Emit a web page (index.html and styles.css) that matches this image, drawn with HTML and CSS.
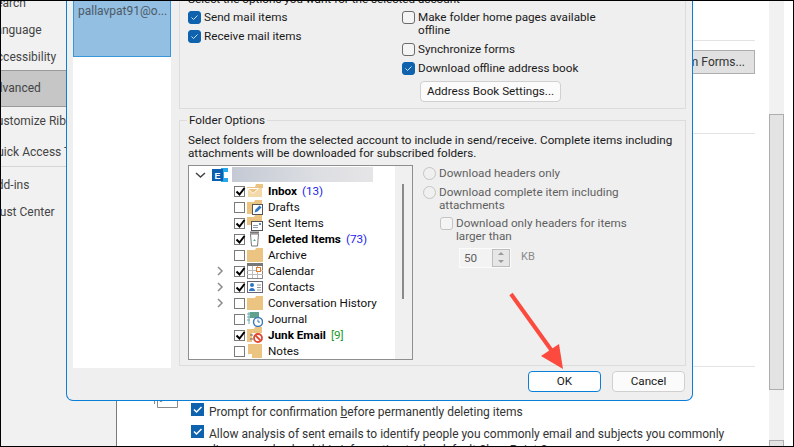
FILE: index.html
```html
<!DOCTYPE html>
<html lang="en">
<head>
<meta charset="utf-8">
<title>Outlook Options - Send/Receive Settings</title>
<link rel="stylesheet" href="styles.css">
</head>
<body>
<div class="screen">
  <aside class="side">
    <div class="side-item h27 first">Search</div>
    <div class="side-item h27">Language</div>
    <div class="side-item h27 last-plain">Accessibility</div>
    <div class="side-item selected">Advanced</div>
    <div class="side-item h31">Customize Ribbon</div>
    <div class="side-item ruled">Quick Access Toolbar</div>
    <div class="side-item h27 gap">Add-ins</div>
    <div class="side-item h27">Trust Center</div>
  </aside>
  <main class="main">
    <div class="rule"></div>
    <div class="forms-row"><span class="back-btn">Custom Forms...</span></div>
    <div class="rule rule-b"></div>
    <div class="rule rule-c"></div>
    <div class="back-options">
      <svg class="back-icon" width="24" height="14" viewBox="0 0 24 14"><path d="M.5 0v10M3.500 0v13.500h20V0M9 6.500h12" fill="none" stroke="#8a8a8a"/><circle cx="7" cy="6.500" r="1.200" fill="none" stroke="#8a8a8a"/></svg>
      <div class="back-lines">
        <label class="back-check"><span class="cb-blue"><svg width="13" height="13" viewBox="0 0 13 13"><path d="M3 6.500l2.500 2.500 5-5" fill="none" stroke="#fff" stroke-width="1.500"/></svg></span><span class="back-text">Prompt for confirmation <u>b</u>efore permanently deleting items</span></label>
        <label class="back-check"><span class="cb-blue"><svg width="13" height="13" viewBox="0 0 13 13"><path d="M3 6.500l2.500 2.500 5-5" fill="none" stroke="#fff" stroke-width="1.500"/></svg></span><span class="back-text">Allow analysis of sent emails to identify people you commonly email and subjects you commonly discuss, and upload this information to the default SharePoint Server.</span></label>
      </div>
    </div>
  </main>
  <div class="scroll"><div class="thumb"></div><div class="thumb-end"></div></div>
  <div class="right-gap"></div>

  <section class="dialog">
    <div class="dialog-body">
      <div class="accounts"><div class="account">pallavpat91@o...</div></div>
      <div class="panes">
        <div class="top-pane">
          <p class="clip-line">Select the options you want for the selected account</p>
          <div class="top-cols">
            <div class="col-left">
              <label class="opt"><span class="cb on"><svg width="13" height="13" viewBox="0 0 13 13"><path d="M3.500 6.500l2 2 4-4" fill="none" stroke="#cfe2f5" stroke-width="1"/></svg></span>Send mail items</label>
              <label class="opt"><span class="cb on"><svg width="13" height="13" viewBox="0 0 13 13"><path d="M3.500 6.500l2 2 4-4" fill="none" stroke="#cfe2f5" stroke-width="1"/></svg></span>Receive mail items</label>
            </div>
            <div class="col-right">
              <label class="opt"><span class="cb"></span><span class="wrap">Make folder home pages available offline</span></label>
              <label class="opt"><span class="cb"></span>Synchronize forms</label>
              <label class="opt"><span class="cb on"><svg width="13" height="13" viewBox="0 0 13 13"><path d="M3.500 6.500l2 2 4-4" fill="none" stroke="#cfe2f5" stroke-width="1"/></svg></span>Download offline address book</label>
              <div class="book-row"><span class="btn book">Address Book Settings...</span></div>
            </div>
          </div>
        </div>
        <fieldset class="folder-pane">
          <legend>Folder Options</legend>
          <p class="desc">Select folders from the selected account to include in send/receive. Complete items including attachments will be downloaded for subscribed folders.</p>
          <div class="folder-cols">
            <div class="tree">
              <div class="tree-list">
                <div class="node root">
                  <svg class="chev" width="12" height="16" viewBox="0 0 12 16"><path d="M2 6l4.500 4 4.500-4" fill="none" stroke="#444" stroke-width="1.500"/></svg>
                  <svg class="ex" width="16" height="14" viewBox="0 0 16 14"><rect x="9" width="7" height="14" fill="#28a8ea"/><rect x="12" y="4" width="4" height="6" fill="#fff"/><rect x="0" y="1" width="11" height="12" fill="#0a5fae"/><text x="2.500" y="10.500" font-family="Liberation Sans" font-size="9" font-weight="700" fill="#fff">E</text></svg>
                  <span class="blur"></span>
                </div>
                <div class="node"><i class="exp"></i><span class="tick"><svg width="13" height="13" viewBox="0 0 13 13"><path d="M2.500 6.500l3 3 5-6.500" fill="none" stroke="#000" stroke-width="2"/></svg></span>
                  <svg class="ico" width="16" height="16" viewBox="0 0 16 16"><path d="M0 4h8l1-3h7v14H0z" fill="#eac480"/><path d="M.5 5.500h11l-5.500 5z M.5 5.500v9h15V5" fill="#f3d9a8" stroke="#fff"/></svg>
                  <b>Inbox</b><span class="n-blue">(13)</span></div>
                <div class="node"><i class="exp"></i><span class="tick"></span>
                  <svg class="ico" width="16" height="16" viewBox="0 0 16 16"><path d="M0 3h7l1-2h7v4H5v10H0z" fill="#eac480"/><rect x="5.500" y="5.500" width="10" height="10" fill="#fff" stroke="#555"/><path d="M7.500 13.500l1-3 4-4 2 2-4 4z" fill="#2e76c4"/></svg>
                  <span>Drafts</span></div>
                <div class="node"><i class="exp"></i><span class="tick"><svg width="13" height="13" viewBox="0 0 13 13"><path d="M2.500 6.500l3 3 5-6.500" fill="none" stroke="#000" stroke-width="2"/></svg></span>
                  <svg class="ico" width="16" height="16" viewBox="0 0 16 16"><path d="M0 2h7l1-2h7v6H4v4H0z" fill="#eac480"/><rect x="4.500" y="6.500" width="11" height="9" fill="#fff" stroke="#555"/><path d="M6 10.500h5M6 12.500h5" stroke="#8a9bb0"/><rect x="12" y="8" width="2" height="2" fill="#5b8fc7"/></svg>
                  <span>Sent Items</span></div>
                <div class="node"><i class="exp"></i><span class="tick"><svg width="13" height="13" viewBox="0 0 13 13"><path d="M2.500 6.500l3 3 5-6.500" fill="none" stroke="#000" stroke-width="2"/></svg></span>
                  <svg class="ico" width="16" height="16" viewBox="0 0 16 16"><path d="M3.500 3h8l-1 12h-6z" fill="#fff" stroke="#777"/><path d="M3 1.500h9" stroke="#777" stroke-width="2"/><path d="M6 10l1.500-2 1.500 2z" fill="#5fae8f"/></svg>
                  <b>Deleted Items</b><span class="n-blue">(73)</span></div>
                <div class="node"><i class="exp"></i><span class="tick"></span>
                  <svg class="ico" width="16" height="16" viewBox="0 0 16 16"><path d="M0 3h8l1-2h7v14H0z" fill="#eac480"/></svg>
                  <span>Archive</span></div>
                <div class="node"><i class="exp"><svg width="8" height="10" viewBox="0 0 8 10"><path d="M2 1l4 4-4 4" fill="none" stroke="#8c8c8c" stroke-width="1.500"/></svg></i><span class="tick"><svg width="13" height="13" viewBox="0 0 13 13"><path d="M2.500 6.500l3 3 5-6.500" fill="none" stroke="#000" stroke-width="2"/></svg></span>
                  <svg class="ico" width="16" height="16" viewBox="0 0 16 16"><rect x=".5" y=".5" width="15" height="15" fill="#fff" stroke="#888"/><rect width="16" height="3" fill="#777"/><path d="M5.500 3v12M10.500 3v12M0 7.500h16M0 11.500h16" stroke="#bbb"/><rect x="9.500" y="4.500" width="4" height="4" fill="#fff" stroke="#e87722"/></svg>
                  <span>Calendar</span></div>
                <div class="node"><i class="exp"><svg width="8" height="10" viewBox="0 0 8 10"><path d="M2 1l4 4-4 4" fill="none" stroke="#8c8c8c" stroke-width="1.500"/></svg></i><span class="tick"><svg width="13" height="13" viewBox="0 0 13 13"><path d="M2.500 6.500l3 3 5-6.500" fill="none" stroke="#000" stroke-width="2"/></svg></span>
                  <svg class="ico" width="16" height="16" viewBox="0 0 16 16"><rect x=".5" y="2.500" width="15" height="11" fill="#fff" stroke="#667"/><circle cx="5" cy="6" r="2" fill="#2e76c4"/><path d="M2 12c0-4 6-4 6 0z" fill="#2e76c4"/><path d="M10 6h4M10 8.500h4M10 11h4" stroke="#999"/></svg>
                  <span>Contacts</span></div>
                <div class="node"><i class="exp"><svg width="8" height="10" viewBox="0 0 8 10"><path d="M2 1l4 4-4 4" fill="none" stroke="#8c8c8c" stroke-width="1.500"/></svg></i><span class="tick"></span>
                  <svg class="ico" width="16" height="16" viewBox="0 0 16 16"><path d="M0 3h8l1-2h7v14H0z" fill="#eac480"/></svg>
                  <span>Conversation History</span></div>
                <div class="node"><i class="exp"></i><span class="tick"></span>
                  <svg class="ico" width="16" height="16" viewBox="0 0 16 16"><path d="M2 1v12M0 3h3M0 6h3M0 9h3" stroke="#6aa" fill="none"/><rect x="3" y="1" width="9" height="6" fill="#5fa08f"/><circle cx="11" cy="11" r="4.500" fill="#fff" stroke="#3a78b8" stroke-width="1.400"/><path d="M11 8.500V11h2" fill="none" stroke="#3a78b8"/></svg>
                  <span>Journal</span></div>
                <div class="node"><i class="exp"></i><span class="tick"><svg width="13" height="13" viewBox="0 0 13 13"><path d="M2.500 6.500l3 3 5-6.500" fill="none" stroke="#000" stroke-width="2"/></svg></span>
                  <svg class="ico" width="16" height="16" viewBox="0 0 16 16"><path d="M0 2h7l1-2h7v6H5v9H0z" fill="#eac480"/><path d="M3 8h3M3 12h3" stroke="#666"/><circle cx="11" cy="11" r="4" fill="#fff" stroke="#e0492f" stroke-width="1.800"/><path d="M8.500 8.500l5 5" stroke="#e0492f" stroke-width="1.800"/></svg>
                  <b>Junk Email</b><span class="n-green">[9]</span></div>
                <div class="node"><i class="exp"></i><span class="tick"></span>
                  <svg class="ico" width="16" height="16" viewBox="0 0 16 16"><path d="M1 1h14v14H5l-4-4z" fill="#eac480"/><path d="M1 11h4v4z" fill="#fff"/></svg>
                  <span>Notes</span></div>
              </div>
              <div class="tree-bar"><div class="tree-thumb"></div></div>
            </div>
            <div class="dl-opts">
              <label class="opt dim"><span class="radio"></span>Download headers only</label>
              <label class="opt dim"><span class="radio"></span><span class="wrap">Download complete item including attachments</span></label>
              <label class="opt dim sub"><span class="cb dimcb"></span><span class="wrap">Download only headers for items larger than</span></label>
              <div class="size-row">
                <span class="spin"><span class="spin-val">50</span><span class="spin-btns"><i class="up"></i><i class="dn"></i></span></span>
                <span class="kb">KB</span>
              </div>
            </div>
          </div>
        </fieldset>
      </div>
    </div>
    <div class="dialog-foot">
      <span class="btn foot ok">OK</span>
      <span class="btn foot">Cancel</span>
    </div>
  </section>

  <svg class="arrow" width="70" height="90" viewBox="0 0 70 90"><path d="M3 4L44 61" stroke="#fc4a3e" stroke-width="4" fill="none"/><path d="M55 79L33 66 51 54z" fill="#fc4a3e"/></svg>
</div>
</body>
</html>
```
FILE: styles.css
```css
* { box-sizing: border-box; }
html, body { margin: 0; padding: 0; background: #fff; }
.screen {
  position: relative;
  width: 794px;
  height: 447px;
  overflow: hidden;
  display: flex;
  border: 1px solid #000;
  font-family: Roboto, "Noto Sans", sans-serif;
  font-size: 11.7px;
  line-height: 13px;
  color: #1a1a1a;
}
p { margin: 0; }
u { text-decoration: underline; }

.side {
  width: 116px;
  flex: none;
  background: #f1f1f1;
  border-right: 1px solid #7a7a7a;
  overflow: hidden;
  font-size: 12px;
  color: #444;
}
.side-item { display: flex; align-items: center; text-indent: -12px; white-space: nowrap; }
.h27 { height: 27px; }
.h31 { height: 31px; padding-bottom: 3px; }
.first { margin-top: -11px; }
.last-plain { margin-bottom: -1px; }
.selected {
  height: 37px;
  background: #c6c6c6;
  border-top: 1px solid #9a9a9a;
  border-bottom: 1px solid #9a9a9a;
  text-indent: -13px;
}
.ruled { height: 29px; border-bottom: 1px solid #d5d5d5; }
.gap { margin-top: 5px; }

.main { flex: 1; min-width: 0; background: #fff; padding-top: 39px; overflow: hidden; font-size: 12px; }
.rule { height: 1px; background: #e3e3e3; margin: 0 14px 0 28px; }
.forms-row { display: flex; justify-content: flex-end; margin: 9px 14px 0 0; height: 24px; }
.back-btn {
  flex: none;
  padding: 0 9px;
  display: flex;
  align-items: center;
  background: #e1e1e1;
  border: 1px solid #adadad;
  color: #333;
  white-space: nowrap;
}
.rule-b { margin-top: 59px; }
.rule-c { margin-top: 232px; }
.back-options { display: flex; margin: 27px 0 0 37px; }
.back-icon { flex: none; }
.back-lines { width: 540px; margin: 9px 0 0 13px; display: flex; flex-direction: column; gap: 5px; color: #333; }
.back-check { display: flex; gap: 5px; line-height: 16px; }
.back-text { padding-top: 1px; }
.cb-blue { flex: none; width: 13px; height: 13px; background: #0f62ae; display: block; }
.cb-blue svg { display: block; }

.scroll { width: 15px; flex: none; background: #f1f1f1; padding-top: 113px; }
.thumb { height: 276px; background: #e3e3e3; border: 1px solid #adadad; }
.thumb-end { height: 14px; margin-top: 50px; background: #e3e3e3; border: 1px solid #adadad; }
.right-gap { width: 9px; flex: none; background: #fff; }

.dialog {
  position: absolute;
  left: 65px;
  top: -1px;
  width: 627px;
  height: 401px;
  display: flex;
  flex-direction: column;
  background: #efefef;
  border: 1px solid #0a7fd8;
  border-top: 0;
  border-radius: 0 0 7px 7px;
}
.dialog-body { flex: none; display: flex; padding-left: 6px; height: 368px; }
.accounts { width: 98px; flex: none; height: 368px; background: #fff; }
.account {
  height: 57px;
  background: #92bfe2;
  border: 1px solid #3a96da;
  border-top: 0;
  padding: 4px 0 0 4px;
  font-size: 12px;
  line-height: 14px;
  color: #4d5a66;
  white-space: nowrap;
}
.panes { flex: 1; padding: 0 6px 0 8px; min-width: 0; display: flex; flex-direction: column; }
.top-pane { height: 109px; flex: none; border: 1px solid #dcdcdc; border-top: 0; padding: 0 8px; margin-bottom: 4px; }
.clip-line { margin-top: -7px; height: 13px; white-space: nowrap; }
.top-cols { display: flex; margin-top: 5px; }
.col-left { width: 214px; flex: none; display: flex; flex-direction: column; gap: 6px; }
.col-right { width: 220px; display: flex; flex-direction: column; gap: 6px; }
.opt { display: flex; gap: 3px; line-height: 13px; }
.wrap { display: block; }
.col-right .wrap { width: 190px; }
.cb { flex: none; width: 13px; height: 13px; border: 1px solid #6b6b6b; border-radius: 3px; background: #f4f4f4; display: block; }
.cb.on { background: #0f62ae; border-color: #0f62ae; }
.cb svg { display: block; margin: -1px; }
.book-row { padding-left: 18px; }
.btn {
  display: inline-flex;
  align-items: center;
  justify-content: center;
  height: 21px;
  background: #fbfbfb;
  border: 1px solid #d0d0d0;
  border-radius: 4px;
  white-space: nowrap;
  color: #1a1a1a;
}
.book { width: 141px; }

.folder-pane { flex: none; margin: 0; border: 1px solid #dcdcdc; padding: 0 8px; min-width: 0; height: 253px; }
.folder-pane legend { padding: 0 2px; margin-left: -1px; line-height: 14px; }
.desc { margin-top: 7px; }
.folder-cols { display: flex; margin-top: 5px; gap: 10px; }
.tree { width: 225px; height: 195px; flex: none; background: #fff; border: 1px solid #8e8e8e; display: flex; overflow: hidden; }
.tree-list { flex: 1; min-width: 0; }
.tree-bar { width: 17px; flex: none; background: #f0f0f0; padding: 18px 0 0 7px; }
.tree-thumb { width: 2px; height: 115px; background: #8a8a8a; }
.node { display: flex; align-items: center; height: 16px; white-space: nowrap; color: #111; }
.node.root { height: 17px; padding-left: 5px; }
.chev { flex: none; margin-right: 6px; }
.ex { flex: none; }
.blur { display: block; width: 141px; height: 15px; margin-left: 4px; background: linear-gradient(90deg, #c4c9d4, #dcdee2 60%, #e6e4e6); }
.exp { flex: none; width: 18px; display: block; margin-left: 27px; height: 10px; }
.exp svg { display: block; }
.tick { flex: none; width: 11px; height: 11px; border: 1px solid #7a7a7a; display: block; margin-right: 2px; }
.tick svg { display: block; margin: -2px 0 0 -1px; }
.ico { flex: none; margin-right: 5px; }
.node b { color: #000; }
.n-blue { color: #2222ee; margin-left: 5px; }
.n-green { color: #1b9a2a; margin-left: 5px; }

.dl-opts { flex: 1; display: flex; flex-direction: column; gap: 6px; padding-top: 2px; }
.dim { color: #5f5f5f; }
.dim .wrap { width: 190px; }
.radio { flex: none; width: 13px; height: 13px; border: 1px solid #c4c4c4; border-radius: 50%; background: #f0f0f0; display: block; }
.sub { padding-left: 17px; margin-top: -1px; }
.dim.sub .wrap { width: 175px; }
.dimcb { border-color: #c4c4c4; }
.size-row { display: flex; align-items: flex-start; padding-left: 36px; gap: 10px; margin-top: -1px; }
.spin { display: flex; width: 52px; height: 20px; background: #f3f3f3; border: 1px solid #fbfbfb; color: #5f5f5f; }
.spin-val { flex: 1; padding: 3px 0 0 4px; }
.spin-btns { width: 18px; flex: none; display: flex; flex-direction: column; background: #e6e6e6; border: 1px solid #bdbdbd; }
.spin-btns i { flex: 1; display: block; position: relative; }
.up::after, .dn::after { content: ""; position: absolute; left: 5px; top: 2px; border: 3px solid transparent; }
.up::after { border-bottom-color: #9a9a9a; border-top: 0; }
.dn::after { border-top-color: #9a9a9a; border-bottom: 0; }
.kb { color: #8a8a8a; font-size: 11px; margin-top: 2px; }

.dialog-foot { flex: none; height: 33px; display: flex; justify-content: flex-end; gap: 11px; padding: 3px 7px 0 0; }
.foot { width: 73px; height: 21px; }
.ok { border: 1px solid #0a7fd8; background: #fff; }

.arrow { position: absolute; left: 507px; top: 289px; }
```
